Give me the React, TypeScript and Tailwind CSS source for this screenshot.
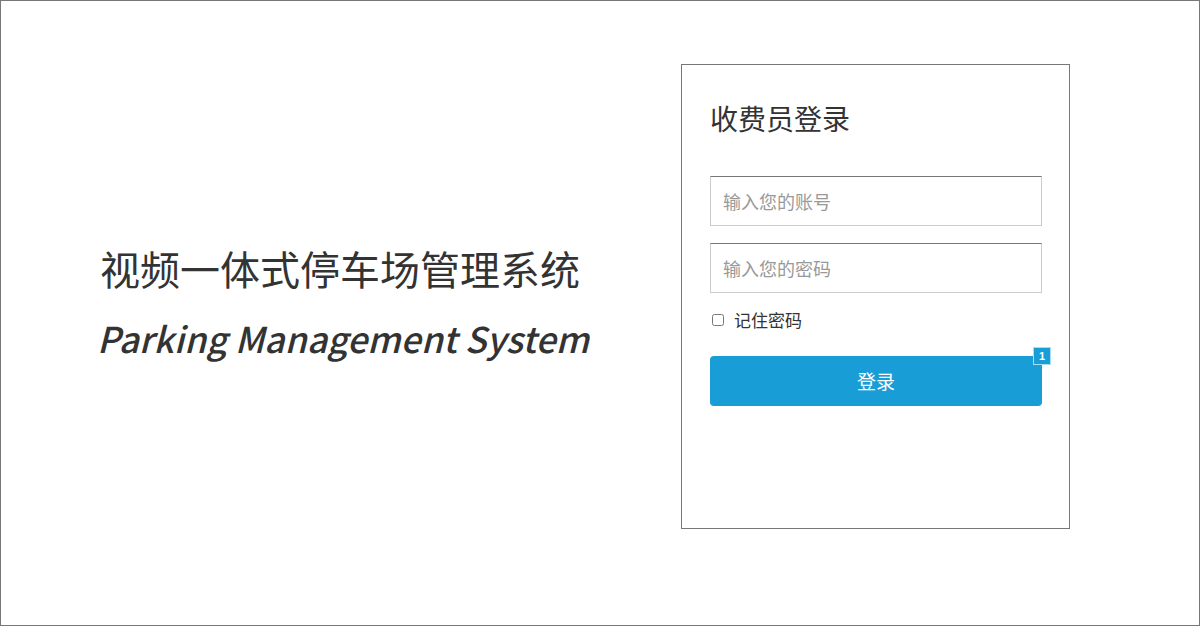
import React from "react";

const cjk = '"Noto Sans CJK SC", "Noto Sans", sans-serif';

const LoginCard = () => {
  return (
    <div className="w-[389px] h-[465px] border border-[#777] bg-white pl-[28px] pr-[27px] pt-[35px]">
      <h2 className="text-[28px] leading-[36px] text-[#333] font-normal">收费员登录</h2>
      <form className="mt-[40px] flex flex-col" onSubmit={(e) => e.preventDefault()}>
        <input
          type="text"
          placeholder="输入您的账号"
          className="h-[50px] w-full border border-[#ccc] border-t-[#777] px-[12px] text-[18px] text-[#333] placeholder:text-[#999] outline-none"
        />
        <input
          type="password"
          placeholder="输入您的密码"
          className="mt-[17px] h-[50px] w-full border border-[#ccc] border-t-[#777] px-[12px] text-[18px] text-[#333] placeholder:text-[#999] outline-none"
        />
        <label className="mt-[17px] flex h-[20px] items-center pl-[2px] text-[17px] text-[#333]">
          <input type="checkbox" className="m-0 h-[12px] w-[12px]" />
          <span className="ml-[10px]">记住密码</span>
        </label>
        <div className="relative mt-[26px]">
          <button
            type="submit"
            className="h-[50px] w-full rounded-[4px] bg-[#189dd6] text-[19px] text-white"
          >
            登录
          </button>
          <span
            className="absolute -right-[9px] -top-[9px] flex h-[18px] w-[18px] items-center justify-center border border-[#a8dcf3] bg-[#189dd6] text-[11px] font-bold leading-none text-white"
            style={{ fontFamily: '"Liberation Sans", Arial, sans-serif' }}
          >
            1
          </span>
        </div>
      </form>
    </div>
  );
};

export default function App() {
  return (
    <div
      className="flex h-[626px] w-[1200px] items-start border border-[#777] bg-white"
      style={{ fontFamily: cjk }}
    >
      <div className="w-[680px] pl-[99px] pt-[243px]">
        <h1 className="text-[40px] leading-[48px] font-normal text-[#333]">视频一体式停车场管理系统</h1>
        <p className="-ml-[3px] mt-[24px] text-[35.5px] leading-[44px] italic font-medium text-[#333]">Parking Management System</p>
      </div>
      <div className="pt-[63px]">
        <LoginCard />
      </div>
    </div>
  );
}
